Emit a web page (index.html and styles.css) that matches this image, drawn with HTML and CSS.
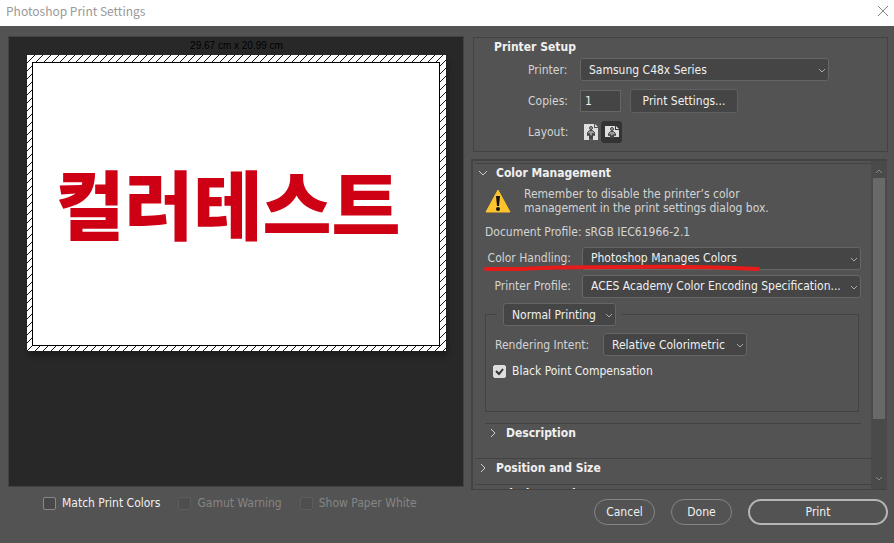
FILE: index.html
```html
<!DOCTYPE html>
<html lang="en">
<head>
    <meta charset="UTF-8">
    <meta name="viewport" content="width=device-width, initial-scale=1.0">
    <title>Photoshop Print Settings</title>
    <link rel="stylesheet" href="styles.css">
</head>
<body>
    <header class="titlebar">
        <span>Photoshop Print Settings</span>
        <button class="close" aria-label="Close">
            <svg width="12" height="12" viewBox="0 0 12 12"><path d="M1 1L11 11M11 1L1 11"/></svg>
        </button>
    </header>
    <main class="dialog">
        <section class="left">
            <div class="preview">
                <p class="paper-size">29.67 cm x 20.99 cm</p>
                <div class="paper">
                    <div class="page" lang="ko">컬러테스트</div>
                </div>
            </div>
            <div class="options">
                <label class="check"><input type="checkbox"><span>Match Print Colors</span></label>
                <label class="check off"><input type="checkbox" disabled><span>Gamut Warning</span></label>
                <label class="check off"><input type="checkbox" disabled><span>Show Paper White</span></label>
            </div>
        </section>
        <section class="right">
            <div class="setup">
                <h2>Printer Setup</h2>
                <div class="setup-row">
                    <label for="printer">Printer:</label>
                    <div class="select printer">
                        <select id="printer"><option>Samsung C48x Series</option></select>
                        <svg width="8" height="5" viewBox="0 0 8 5"><path d="M1 1L4 4L7 1"/></svg>
                    </div>
                </div>
                <div class="setup-row">
                    <label for="copies">Copies:</label>
                    <input class="copies" id="copies" type="text" value="1">
                    <button class="settings">Print Settings...</button>
                </div>
                <div class="setup-row">
                    <span class="name">Layout:</span>
                    <button class="layout" aria-label="Portrait">
                        <svg width="14" height="16" viewBox="0 0 14 16">
                            <path fill="#dedede" d="M0 0H10V4H14V16H0ZM11 0L14 3H11Z"/>
                            <circle cx="7" cy="4" r="1.500" fill="#999" stroke="#444"/>
                            <path fill="#999" stroke="#444" d="M5.500 6.500H8.500L10.500 8.500V11.500H9.500V9.500H8.500V15.500H7.500V11.500H6.500V15.500H5.500V9.500H4.500V11.500H3.500V8.500Z"/>
                        </svg>
                    </button>
                    <button class="layout active" aria-label="Landscape">
                        <svg width="14" height="12" viewBox="0 0 14 12">
                            <path fill="#dedede" d="M0 0H10V4H14V11H0ZM11 0L14 3H11Z"/>
                            <circle cx="7" cy="3" r="1.500" fill="#999" stroke="#444"/>
                            <path fill="#999" stroke="#444" d="M5.500 5.500H8.500L10.500 7.500V9.500H9.500V8.500H8.500V11.500H7.500V9.500H6.500V11.500H5.500V8.500H4.500V9.500H3.500V7.500Z"/>
                        </svg>
                    </button>
                </div>
            </div>

            <div class="panel">
                <div class="sections">
                    <h2 class="fold">
                        <svg width="10" height="10" viewBox="0 0 10 10"><path d="M1 3L5 7L9 3"/></svg>
                        Color Management
                    </h2>
                    <div class="management">
                        <div class="warning">
                            <svg width="26" height="24" viewBox="0 0 26 24">
                                <path d="M13 1L25 23H1Z" fill="#fdc42d" stroke="#fdc42d" stroke-linejoin="round"/>
                                <path d="M11 7H15L14 17H12Z" fill="#111"/>
                                <circle cx="13" cy="20" r="2" fill="#111"/>
                            </svg>
                            <p>Remember to disable the printer’s color<br>management in the print settings dialog box.</p>
                        </div>
                        <p class="profile">Document Profile: sRGB IEC61966-2.1</p>
                        <div class="row">
                            <label for="handling">Color Handling:</label>
                            <div class="select">
                                <select id="handling"><option>Photoshop Manages Colors</option></select>
                                <svg width="8" height="5" viewBox="0 0 8 5"><path d="M1 1L4 4L7 1"/></svg>
                            </div>
                            <svg class="marker" width="278" height="8" viewBox="0 0 278 8"><path d="M2 5H38C65 3 110 3 145 3C195 2 230 3 274 5"/></svg>
                        </div>
                        <div class="row">
                            <label for="profile">Printer Profile:</label>
                            <div class="select">
                                <select id="profile"><option>ACES Academy Color Encoding Specification...</option></select>
                                <svg width="8" height="5" viewBox="0 0 8 5"><path d="M1 1L4 4L7 1"/></svg>
                            </div>
                        </div>
                        <fieldset class="printing">
                            <legend>
                                <div class="select mode">
                                    <select aria-label="Printing mode"><option>Normal Printing</option></select>
                                    <svg width="8" height="5" viewBox="0 0 8 5"><path d="M1 1L4 4L7 1"/></svg>
                                </div>
                            </legend>
                            <div class="intent-row">
                                <label for="intent">Rendering Intent:</label>
                                <div class="select intent">
                                    <select id="intent"><option>Relative Colorimetric</option></select>
                                    <svg width="8" height="5" viewBox="0 0 8 5"><path d="M1 1L4 4L7 1"/></svg>
                                </div>
                            </div>
                            <label class="check black-point">
                                <input type="checkbox" checked>
                                <svg class="tick" width="9" height="9" viewBox="0 0 9 9"><path d="M1 4L4 7L8 2"/></svg>
                                <span>Black Point Compensation</span>
                            </label>
                        </fieldset>
                        <h2 class="fold description">
                            <svg width="10" height="10" viewBox="0 0 10 10"><path d="M3 1L7 5L3 9"/></svg>
                            Description
                        </h2>
                    </div>
                    <h2 class="fold">
                        <svg width="10" height="10" viewBox="0 0 10 10"><path d="M3 1L7 5L3 9"/></svg>
                        Position and Size
                    </h2>
                    <h2 class="fold">
                        <svg width="10" height="10" viewBox="0 0 10 10"><path d="M3 1L7 5L3 9"/></svg>
                        Printing Marks
                    </h2>
                </div>
                <div class="scrollbar">
                    <svg width="8" height="5" viewBox="0 0 8 5"><path d="M1 4L4 1L7 4"/></svg>
                    <div class="track"><div class="thumb"></div></div>
                    <svg width="8" height="5" viewBox="0 0 8 5"><path d="M1 1L4 4L7 1"/></svg>
                </div>
            </div>

            <div class="actions">
                <button class="pill">Cancel</button>
                <button class="pill">Done</button>
                <button class="pill primary">Print</button>
            </div>
        </section>
    </main>
</body>
</html>
```

FILE: styles.css
```css
* {
    box-sizing: border-box;
}
body {
    margin: 0;
    height: 100vh;
    display: flex;
    flex-direction: column;
    background: #535353;
    color: #f0f0f0;
    font-family: "DejaVu Sans Condensed", "DejaVu Sans", sans-serif;
    font-size: 12px;
    line-height: 14px;
}
h2, p {
    margin: 0;
    font-size: 12px;
}
button, input, select {
    margin: 0;
    color: inherit;
    font: inherit;
}
svg {
    flex: none;
    fill: none;
}
.titlebar {
    display: flex;
    justify-content: space-between;
    align-items: center;
    height: 26px;
    padding: 0 5px 4px 6px;
    background: #fff;
    color: #999;
    font-family: "Noto Sans CJK KR", sans-serif;
}
.close {
    display: flex;
    padding: 0;
    border: 0;
    background: none;
}
.close svg {
    stroke: #888;
}
.dialog {
    flex: 1;
    min-height: 0;
    display: grid;
    grid-template-columns: 57fr 52fr;
    gap: 8px;
    padding: 10px 6px 0 8px;
}
.left, .right {
    display: flex;
    flex-direction: column;
    min-width: 0;
    min-height: 0;
}

/* preview */
.preview {
    flex: 1;
    min-height: 0;
    padding: 2px 17px 0 18px;
    border: 1px solid #434343;
    background: #282828;
}
.paper-size {
    height: 16px;
    color: #000;
    font-family: "Liberation Sans", sans-serif;
    font-size: 10px;
    text-align: center;
}
.paper {
    display: flex;
    aspect-ratio: 419 / 296;
    padding: 7px 6px 5px 5px;
    background: linear-gradient(135deg, #fff 46%, #111 46%, #111 54%, #fff 54%) 0 0 / 8px 8px;
    box-shadow: 2px 5px 5px #1e1e1e;
}
.page {
    flex: 1;
    display: flex;
    align-items: center;
    justify-content: center;
    padding: 0 16px 4px 0;
    border: 1px solid #000;
    background: #fff;
    color: #ce0014;
    font-family: "Noto Sans CJK KR", sans-serif;
    font-size: 75px;
    font-weight: 900;
    line-height: 80px;
    white-space: nowrap;
}
.options {
    display: flex;
    gap: 18px;
    height: 56px;
    padding: 9px 0 0 35px;
}
.check {
    display: flex;
    align-items: center;
    gap: 6px;
    height: 14px;
}
.check input {
    appearance: none;
    width: 13px;
    height: 13px;
    border: 1px solid #888;
    border-radius: 2px;
    background: #484848;
}
.check input:checked {
    border-color: #ddd;
    background: #ddd;
}
.off {
    color: #858585;
}
.off input {
    border-color: #5d5d5d;
    background: #4e4e4e;
}

/* printer setup */
.setup {
    display: flex;
    flex-direction: column;
    gap: 6px;
    height: 115px;
    margin: 1px 0 0 1px;
    padding: 2px 20px 0;
    border: 1px solid #434343;
}
.setup h2 {
    height: 11px;
}
.setup-row {
    display: flex;
    align-items: center;
    height: 25px;
    padding-left: 34px;
    color: #d4d4d4;
}
.setup-row label, .name {
    width: 52px;
}
.select {
    position: relative;
    flex: 1;
    min-width: 0;
}
.select select {
    appearance: none;
    display: block;
    width: 100%;
    height: 23px;
    padding: 0 8px;
    border: 1px solid #666;
    border-radius: 3px;
    background: #454545;
    color: #f0f0f0;
}
.select svg {
    position: absolute;
    right: 3px;
    top: 10px;
    stroke: #aaa;
}
.printer {
    max-width: 249px;
}
.copies {
    width: 41px;
    height: 22px;
    margin-right: 9px;
    padding: 0 4px;
    border: 1px solid #666;
    background: #454545;
    color: #f0f0f0;
}
.settings {
    width: 108px;
    height: 24px;
    padding: 0;
    border: 1px solid #606060;
    border-radius: 3px;
    background: #454545;
    color: #f0f0f0;
}
.layout {
    display: flex;
    align-items: center;
    justify-content: center;
    width: 21px;
    height: 22px;
    padding: 0;
    border: 1px solid transparent;
    border-radius: 3px;
    background: none;
}
.active {
    border-color: #333;
    background: #333;
}

/* scrolling sections */
.panel {
    flex: 1;
    min-height: 0;
    display: flex;
    margin: 7px 1px 0 -1px;
    border: 1px solid #434343;
    border-width: 2px 0 1px 2px;
    overflow: hidden;
}
.sections {
    flex: 1;
    min-width: 0;
    padding: 2px 0 0 2px;
}
.fold {
    display: flex;
    align-items: center;
    gap: 8px;
    height: 26px;
    padding: 0 0 8px 3px;
    border-top: 1px solid #434343;
}
.fold svg {
    stroke: #ccc;
}
.management {
    padding: 0 10px;
    color: #d4d4d4;
}
.warning {
    display: flex;
    gap: 13px;
    height: 36px;
}
.warning p {
    margin-top: -2px;
}
.profile {
    height: 19px;
}
.row {
    position: relative;
    display: flex;
    align-items: center;
    height: 28px;
}
.row label {
    width: 97px;
    padding-right: 11px;
    text-align: right;
    white-space: nowrap;
}
.marker {
    position: absolute;
    left: -1px;
    bottom: 0;
    stroke: #e81b1b;
    stroke-width: 4;
    stroke-linecap: round;
}
.printing {
    height: 109px;
    margin: 3px 2px 0 0;
    padding: 7px 7px 0;
    border: 1px solid #434343;
    min-width: 0;
}
.printing legend {
    margin-left: 4px;
    padding: 0 6px;
}
.mode {
    width: 113px;
}
.intent-row {
    display: flex;
    align-items: center;
}
.intent-row label {
    width: 110px;
    padding-left: 2px;
}
.intent {
    max-width: 144px;
}
.black-point {
    position: relative;
    margin-top: 8px;
    color: #f0f0f0;
}
.tick {
    position: absolute;
    left: 2px;
    top: 3px;
    stroke: #333;
    stroke-width: 2;
}
.description {
    height: 35px;
    margin: 11px 0 0;
    padding-bottom: 16px;
    color: #f0f0f0;
}
.scrollbar {
    display: flex;
    flex-direction: column;
    align-items: center;
    width: 16px;
    padding: 8px 2px;
    background: #4a4a4a;
}
.scrollbar svg {
    stroke: #888;
}
.track {
    flex: 1;
    width: 12px;
    margin: 4px 0;
}
.thumb {
    height: 82%;
    background: #696969;
}

/* dialog buttons */
.actions {
    display: flex;
    justify-content: flex-end;
    gap: 16px;
    height: 53px;
    padding-top: 9px;
}
.pill {
    width: 61px;
    height: 26px;
    padding: 0;
    border: 1px solid #858585;
    border-radius: 13px;
    background: none;
}
.primary {
    width: 140px;
    border: 2px solid #b5b5b5;
}
```
